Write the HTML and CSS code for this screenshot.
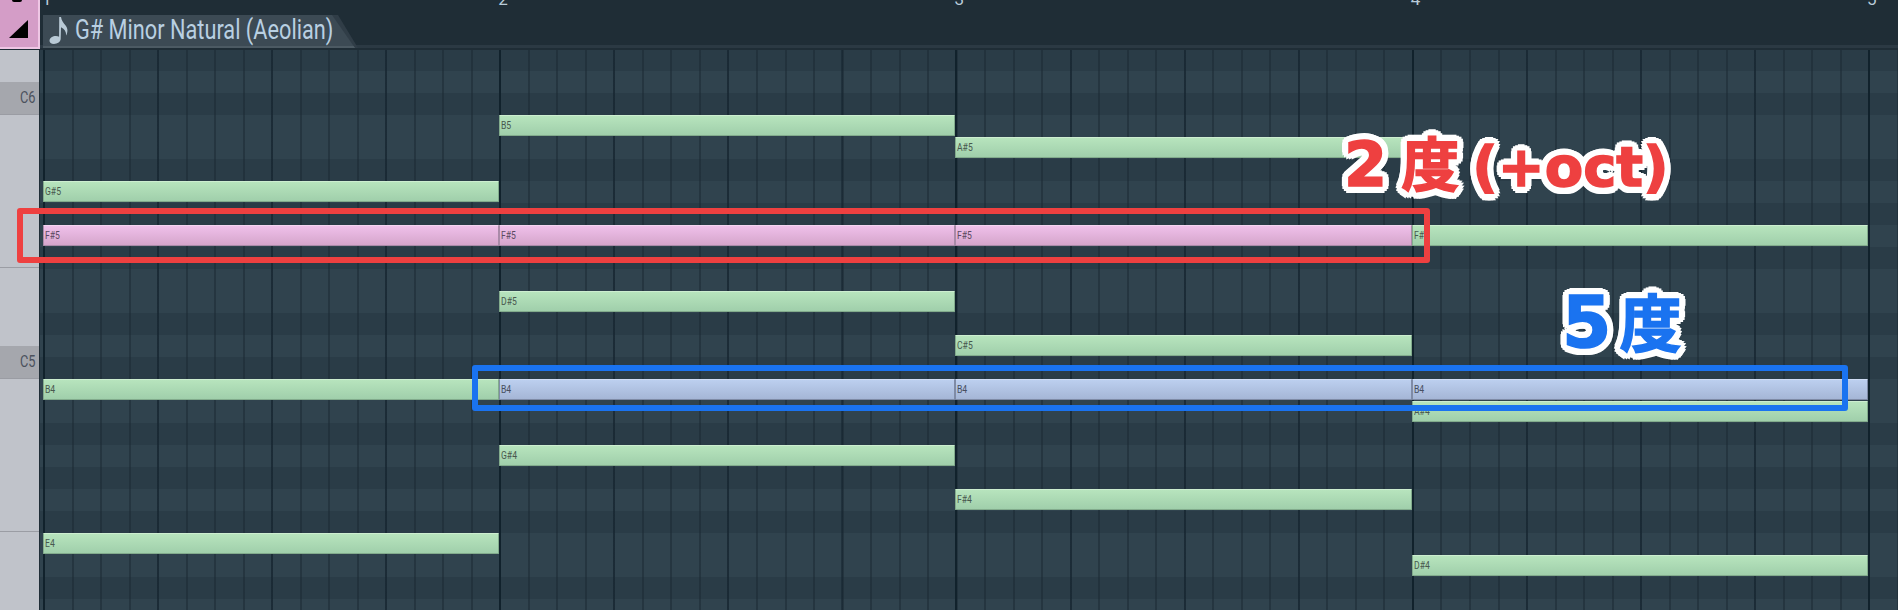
FILE: index.html
```html
<!DOCTYPE html>
<html lang="ja">
<head>
<meta charset="utf-8">
<title>G# Minor Natural (Aeolian)</title>
<link rel="stylesheet" href="styles.css">
</head>
<body>
<div class="app">
  <header class="top">
    <div class="corner">
      <span class="corner-nub"></span>
      <svg class="corner-tri" viewBox="0 0 24 20" width="24" height="20"><polygon points="2,19 21,1 21,19" fill="#000"/></svg>
    </div>
    <div class="head">
      <div class="ruler">
        <span class="tick">1</span><span class="tick">2</span><span class="tick">3</span><span class="tick">4</span><span class="tick">5</span>
      </div>
      <div class="tabrow">
        <div class="tab">
          <svg class="note-icon" viewBox="0 0 22 28" width="22" height="28"><path d="M11.2 1h1.8c.6 4 2.6 6 4.6 8.4 2 2.6 2.6 5.6.6 10-.1-3.6-1.6-6.6-5.2-8.2l-.3 11.6c0 3-3.2 5.2-6.8 5.2-2.8 0-4.4-1.4-4.4-3.2 0-2.8 3.2-4.8 6.4-4.8 1.4 0 2.4.3 3.2.8z" fill="#b9cad6"/></svg>
          <span class="tab-title">G# Minor Natural (Aeolian)</span>
        </div>
      </div>
    </div>
  </header>
  <div class="body">
    <aside class="keys">
      <div class="key k32"></div>
      <div class="key k33 oct"><span>C6</span></div>
      <div class="key k153 line"></div>
      <div class="key k78"></div>
      <div class="key k33 oct"><span>C5</span></div>
      <div class="key k153 line"></div>
      <div class="key k78"></div>
    </aside>
    <main class="roll">
      <div class="row d first"></div>
      <div class="row l"></div>
      <div class="row d"></div>
      <div class="row l"></div>
      <div class="row l"></div>
      <div class="row d"></div>
      <div class="row l"></div>
      <div class="row d"></div>
      <div class="row l"></div>
      <div class="row d"></div>
      <div class="row l"></div>
      <div class="row l"></div>
      <div class="row d"></div>
      <div class="row l"></div>
      <div class="row d"></div>
      <div class="row l"></div>
      <div class="row l"></div>
      <div class="row d"></div>
      <div class="row l"></div>
      <div class="row d"></div>
      <div class="row l"></div>
      <div class="row d"></div>
      <div class="row l"></div>
      <div class="row l"></div>
      <div class="row d"></div>
      <div class="row l"></div>
      <div class="vlines"></div>

      <div class="n green" style="left:3px;top:131px;width:456px"><span>G#5</span></div>
      <div class="n pink" style="left:3px;top:175px;width:456px"><span>F#5</span></div>
      <div class="n green" style="left:3px;top:329px;width:456px"><span>B4</span></div>
      <div class="n green" style="left:3px;top:483px;width:456px"><span>E4</span></div>

      <div class="n green" style="left:459px;top:65px;width:456px"><span>B5</span></div>
      <div class="n pink" style="left:459px;top:175px;width:456px"><span>F#5</span></div>
      <div class="n green" style="left:459px;top:241px;width:456px"><span>D#5</span></div>
      <div class="n blue" style="left:459px;top:329px;width:456px"><span>B4</span></div>
      <div class="n green" style="left:459px;top:395px;width:456px"><span>G#4</span></div>

      <div class="n green" style="left:915px;top:87px;width:457px"><span>A#5</span></div>
      <div class="n pink" style="left:915px;top:175px;width:457px"><span>F#5</span></div>
      <div class="n green" style="left:915px;top:285px;width:457px"><span>C#5</span></div>
      <div class="n blue" style="left:915px;top:329px;width:457px"><span>B4</span></div>
      <div class="n green" style="left:915px;top:439px;width:457px"><span>F#4</span></div>

      <div class="n green" style="left:1372px;top:175px;width:456px"><span>F#5</span></div>
      <div class="n blue" style="left:1372px;top:329px;width:456px"><span>B4</span></div>
      <div class="n green" style="left:1372px;top:351px;width:456px"><span>A#4</span></div>
      <div class="n green" style="left:1372px;top:505px;width:456px"><span>D#4</span></div>
    </main>
  </div>

  <div class="mark mark-red"></div>
  <div class="mark mark-blue"></div>
  <div class="label label-red"><span class="dg">2</span><span class="kan">度</span><span class="lat">(+oct)</span></div>
  <div class="label label-blue"><span class="dg">5</span><span class="kan">度</span></div>
</div>
</body>
</html>
```
FILE: styles.css
```css
* { box-sizing: border-box; }
html, body { margin: 0; padding: 0; }
body { background: #1f2d36; overflow: hidden; }
.app {
  position: relative;
  width: 1898px;
  height: 610px;
  overflow: hidden;
  font-family: Roboto, "Liberation Sans", sans-serif;
}

/* header */
.top { display: flex; height: 50px; background: #1f2d36; }
.corner {
  position: relative;
  width: 40px;
  height: 49px;
  background: #d49dc7;
  border-right: 2px solid #eec6e4;
  border-bottom: 2px solid #eec6e4;
  display: flex;
  align-items: flex-end;
  padding: 0 0 8px 7px;
}
.corner-nub {
  position: absolute;
  left: 12px;
  top: 0;
  width: 10px;
  height: 2px;
  background: #000;
  border-radius: 0 0 4px 4px;
}
.corner-tri { display: block; }
.head { flex: 1; display: flex; flex-direction: column; min-width: 0; }
.ruler {
  height: 15px;
  overflow: hidden;
  display: flex;
  padding-left: 2px;
  color: #b8cbd9;
  font-size: 17px;
  line-height: 12px;
}
.tick { width: 456.25px; flex: none; margin-top: -7px; height: 12px; }
.tabrow {
  height: 35px;
  padding-left: 3px;
  background: linear-gradient(to bottom, transparent 0 30px, #2b3943 30px 33px, #1f2d36 33px);
}
.tab {
  position: relative;
  width: 315px;
  height: 33px;
  overflow: hidden;
  background: #303d47;
  clip-path: polygon(0 0, 295px 0, 315px 33px, 0 33px);
  display: flex;
  align-items: center;
  gap: 5px;
  padding: 0 0 3px 5px;
  color: #b9d0e2;
}
.tab::before {
  content: "";
  position: absolute;
  inset: 0;
  background: #3c4a54;
  border-bottom: 2px solid #4c5a63;
  clip-path: polygon(0 0, 289px 0, 312px 33px, 0 33px);
}
.note-icon { display: block; flex: none; position: relative; }
.tab-title {
  position: relative;
  display: inline-block;
  font-size: 27px;
  line-height: 30px;
  white-space: nowrap;
  transform: scaleX(.805);
  transform-origin: left center;
}

/* keyboard */
.body { display: flex; height: 560px; }
.keys { width: 39px; flex: none; background: #c0c3ca; }
.key { width: 100%; }
.k32 { height: 32px; }
.k33 { height: 33px; }
.k153 { height: 153px; }
.k78 { height: 78px; }
.oct {
  background: #a5a7ad;
  border-bottom: 1px solid #9a9ca3;
  color: #4c525d;
  font-size: 16px;
  text-align: right;
  padding: 7px 4px 0 0;
  line-height: 18px;
}
.oct span { display: inline-block; transform: scaleX(.8); transform-origin: right center; }
.line { border-bottom: 1px solid #9b9da4; }

/* piano roll */
.roll {
  position: relative;
  flex: 1;
  margin-left: 1px;
  overflow: hidden;
  background: #2a3c47;
}
.row { height: 22px; }
.row.first { height: 21px; }
.row.l { background: #30434e; }
.row.d { background: #2a3c47; }
.vlines {
  position: absolute;
  inset: 0 0 0 3px;
  background:
    repeating-linear-gradient(to right, #11222c 0 2px, transparent 2px 456.25px),
    repeating-linear-gradient(to right, rgba(20, 36, 47, .55) 0 2px, transparent 2px 114.06px),
    repeating-linear-gradient(to right, rgba(26, 40, 50, .5) 0 2px, transparent 2px 28.52px);
}

/* notes */
.n {
  position: absolute;
  height: 21px;
  border: 1px solid;
  border-radius: 1px;
  padding-left: 1px;
  font-size: 10px;
  line-height: 19px;
  color: #48584e;
  white-space: nowrap;
  overflow: hidden;
}
.n span { display: inline-block; transform: scaleX(.86); transform-origin: left center; }
.green { background: linear-gradient(#b7e4bd, #a0cfab); border-color: #82ab8c; border-top-color: #cdeed0; }
.pink { background: linear-gradient(#efc0ea, #d5a5cb); border-color: #a98aa8; border-top-color: #f4d4f0; color: #5a4a60; }
.blue { background: linear-gradient(#bccfef, #a5b6d6); border-color: #7f8ba6; border-top-color: #cfdcf4; color: #474f60; }

/* annotations */
.mark { position: absolute; border: 6px solid; border-radius: 3px; }
.mark-red { left: 17px; top: 208px; width: 1413px; height: 55px; border-color: #ee4040; }
.mark-blue { left: 472px; top: 365px; width: 1376px; height: 46px; border-color: #1a73f0; }
.label {
  position: absolute;
  display: flex;
  align-items: baseline;
  font-weight: 700;
  white-space: nowrap;
  -webkit-text-stroke: 1.5px currentColor;
  text-shadow:
    7px 0 0 #fff, -7px 0 0 #fff, 0 7px 0 #fff, 0 -7px 0 #fff,
    6.5px 2.7px 0 #fff, -6.5px 2.7px 0 #fff, 6.5px -2.7px 0 #fff, -6.5px -2.7px 0 #fff,
    2.7px 6.5px 0 #fff, -2.7px 6.5px 0 #fff, 2.7px -6.5px 0 #fff, -2.7px -6.5px 0 #fff,
    5px 5px 0 #fff, -5px 5px 0 #fff, 5px -5px 0 #fff, -5px -5px 0 #fff,
    3.5px 0 0 #fff, -3.5px 0 0 #fff, 0 3.5px 0 #fff, 0 -3.5px 0 #fff,
    2.5px 2.5px 0 #fff, -2.5px 2.5px 0 #fff, 2.5px -2.5px 0 #fff, -2.5px -2.5px 0 #fff;
}
.dg, .lat { font-family: "DejaVu Sans", "Liberation Sans", sans-serif; }
.kan { font-family: "Noto Sans CJK JP", sans-serif; }

.label-red { left: 1344px; top: 126px; line-height: 70px; color: #ee4040; }
.label-red .dg { font-size: 62px; }
.label-red .kan { font-size: 58px; margin-left: 14px; }
.label-red .lat { font-size: 56px; margin-left: 13px; }

.label-blue { left: 1562px; top: 282px; line-height: 76px; color: #1a73f0; }
.label-blue .dg { font-size: 71px; }
.label-blue .kan { font-size: 62px; margin-left: 8px; }
```
